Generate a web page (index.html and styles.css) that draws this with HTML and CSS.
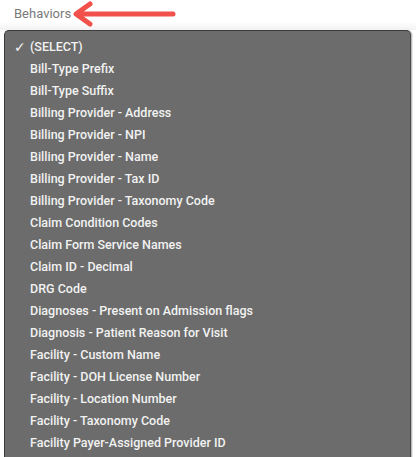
FILE: index.html
```html
<!DOCTYPE html>
<html>
<head>
<meta charset="utf-8">
<link rel="stylesheet" href="styles.css">
</head>
<body>
<div class="header">
  <span class="label">Behaviors</span>
  <svg class="arrow" width="110" height="26" viewBox="0 0 110 26">
    <path d="M103 13 H8 M20 3 L6 13 L20 23" fill="none" stroke="#f2504a" stroke-width="5" stroke-linecap="round" stroke-linejoin="round"/>
  </svg>
</div>
<div class="menu">
  <div class="item selected"><span class="check">✓</span>(SELECT)</div>
  <div class="item">Bill-Type Prefix</div>
  <div class="item">Bill-Type Suffix</div>
  <div class="item">Billing Provider - Address</div>
  <div class="item">Billing Provider - NPI</div>
  <div class="item">Billing Provider - Name</div>
  <div class="item">Billing Provider - Tax ID</div>
  <div class="item">Billing Provider - Taxonomy Code</div>
  <div class="item">Claim Condition Codes</div>
  <div class="item">Claim Form Service Names</div>
  <div class="item">Claim ID - Decimal</div>
  <div class="item">DRG Code</div>
  <div class="item">Diagnoses - Present on Admission flags</div>
  <div class="item">Diagnosis - Patient Reason for Visit</div>
  <div class="item">Facility - Custom Name</div>
  <div class="item">Facility - DOH License Number</div>
  <div class="item">Facility - Location Number</div>
  <div class="item">Facility - Taxonomy Code</div>
  <div class="item">Facility Payer-Assigned Provider ID</div>
</div>
</body>
</html>
```
FILE: styles.css
```css
html, body {
  margin: 0;
  padding: 0;
  background: #ffffff;
  overflow: hidden;
}
body {
  width: 416px;
  height: 457px;
  font-family: Roboto, "Helvetica Neue", Arial, sans-serif;
}
.header {
  height: 30px;
  display: flex;
  align-items: flex-start;
  background: linear-gradient(to bottom, #ffffff 0, #ffffff 22px, #f1f1f1 30px);
}
.label {
  margin-left: 14px;
  margin-top: 5px;
  font-size: 13px;
  color: #7a7a7a;
  line-height: 18px;
}
.arrow {
  margin-left: -1px;
  margin-top: 1px;
}
.menu {
  margin-left: 4px;
  width: 407px;
  height: 440px;
  background: #6b6c6b;
  border: 1px solid #3c3c3c;
  border-right-color: #4a4a4a;
  border-radius: 5px 5px 0 0;
  padding-top: 5px;
  box-sizing: border-box;
  box-shadow: 1px 0 0 #b8b8b8, 2px 0 0 #e8e8e8;
}
.item {
  height: 22px;
  line-height: 22px;
  padding-left: 25px;
  font-size: 12.5px;
  font-weight: 500;
  color: #f2f2f2;
  white-space: nowrap;
  position: relative;
}
.check {
  position: absolute;
  left: 9px;
  top: 0;
  font-size: 14px;
  font-family: "DejaVu Sans", sans-serif;
}
```
